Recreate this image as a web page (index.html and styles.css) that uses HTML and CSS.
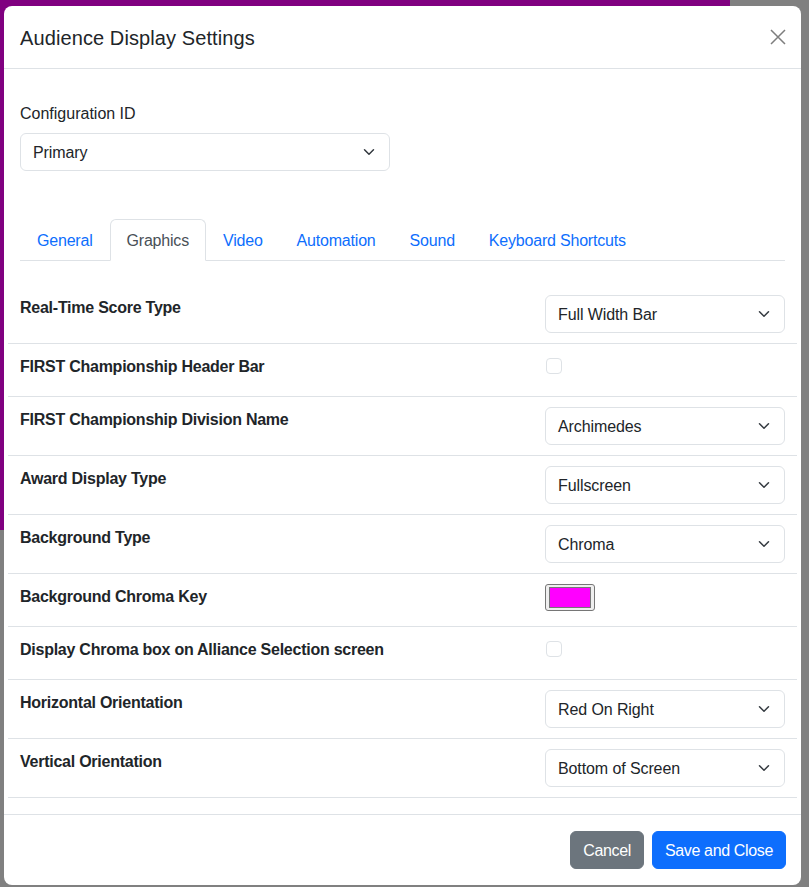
FILE: index.html
```html
<!DOCTYPE html>
<html lang="en">
<head>
<meta charset="utf-8">
<title>Audience Display Settings</title>
<link rel="stylesheet" href="styles.css">
</head>
<body>
<div class="modal">
  <div class="modal-header">
    <h5 class="modal-title">Audience Display Settings</h5>
    <button class="btn-close" aria-label="Close">
      <svg width="16" height="16" viewBox="0 0 16 16"><path d="M1 1 15 15M15 1 1 15" stroke="#000" stroke-width="1.5" fill="none"/></svg>
    </button>
  </div>
  <div class="modal-body">
    <div class="config">
      <label class="form-label">Configuration ID</label>
      <div class="select select-config"><span>Primary</span><svg class="chev" width="16" height="12" viewBox="0 0 16 16"><path d="m2 5 6 6 6-6" fill="none" stroke="#343a40" stroke-width="2" stroke-linecap="round" stroke-linejoin="round"/></svg></div>
    </div>
    <ul class="nav-tabs">
      <li><a class="nav-link">General</a></li>
      <li><a class="nav-link active">Graphics</a></li>
      <li><a class="nav-link">Video</a></li>
      <li><a class="nav-link">Automation</a></li>
      <li><a class="nav-link">Sound</a></li>
      <li><a class="nav-link">Keyboard Shortcuts</a></li>
    </ul>
    <div class="tab-content">
      <div class="settings">
        <div class="row">
          <div class="cell-label">Real-Time Score Type</div>
          <div class="cell-control"><div class="select"><span>Full Width Bar</span><svg class="chev" width="16" height="12" viewBox="0 0 16 16"><path d="m2 5 6 6 6-6" fill="none" stroke="#343a40" stroke-width="2" stroke-linecap="round" stroke-linejoin="round"/></svg></div></div>
        </div>
        <div class="row">
          <div class="cell-label">FIRST Championship Header Bar</div>
          <div class="cell-control"><div class="check-wrap"><span class="checkbox"></span></div></div>
        </div>
        <div class="row">
          <div class="cell-label">FIRST Championship Division Name</div>
          <div class="cell-control"><div class="select"><span>Archimedes</span><svg class="chev" width="16" height="12" viewBox="0 0 16 16"><path d="m2 5 6 6 6-6" fill="none" stroke="#343a40" stroke-width="2" stroke-linecap="round" stroke-linejoin="round"/></svg></div></div>
        </div>
        <div class="row">
          <div class="cell-label">Award Display Type</div>
          <div class="cell-control"><div class="select"><span>Fullscreen</span><svg class="chev" width="16" height="12" viewBox="0 0 16 16"><path d="m2 5 6 6 6-6" fill="none" stroke="#343a40" stroke-width="2" stroke-linecap="round" stroke-linejoin="round"/></svg></div></div>
        </div>
        <div class="row">
          <div class="cell-label">Background Type</div>
          <div class="cell-control"><div class="select"><span>Chroma</span><svg class="chev" width="16" height="12" viewBox="0 0 16 16"><path d="m2 5 6 6 6-6" fill="none" stroke="#343a40" stroke-width="2" stroke-linecap="round" stroke-linejoin="round"/></svg></div></div>
        </div>
        <div class="row">
          <div class="cell-label">Background Chroma Key</div>
          <div class="cell-control"><div class="color-wrap"><span class="color-input"><span class="swatch"></span></span></div></div>
        </div>
        <div class="row">
          <div class="cell-label">Display Chroma box on Alliance Selection screen</div>
          <div class="cell-control"><div class="check-wrap"><span class="checkbox"></span></div></div>
        </div>
        <div class="row">
          <div class="cell-label">Horizontal Orientation</div>
          <div class="cell-control"><div class="select"><span>Red On Right</span><svg class="chev" width="16" height="12" viewBox="0 0 16 16"><path d="m2 5 6 6 6-6" fill="none" stroke="#343a40" stroke-width="2" stroke-linecap="round" stroke-linejoin="round"/></svg></div></div>
        </div>
        <div class="row">
          <div class="cell-label">Vertical Orientation</div>
          <div class="cell-control"><div class="select"><span>Bottom of Screen</span><svg class="chev" width="16" height="12" viewBox="0 0 16 16"><path d="m2 5 6 6 6-6" fill="none" stroke="#343a40" stroke-width="2" stroke-linecap="round" stroke-linejoin="round"/></svg></div></div>
        </div>
      </div>
    </div>
  </div>
  <div class="modal-footer">
    <button class="btn btn-secondary">Cancel</button>
    <button class="btn btn-primary">Save and Close</button>
  </div>
</div>
</body>
</html>
```

FILE: styles.css
```css
* { box-sizing: border-box; }

html, body { height: 100%; }

body {
  margin: 0;
  font-family: "Liberation Sans", Arial, sans-serif;
  font-size: 16px;
  line-height: 24px;
  color: #212529;
  background: linear-gradient(#800080, #800080) no-repeat 0 0 / 730px 530px, #808080;
  overflow: hidden;
}

.modal {
  width: 797px;
  height: 879px;
  margin: 6px 0 0 4px;
  background: #fff;
  border-radius: 8px;
  display: flex;
  flex-direction: column;
  overflow: hidden;
}

.modal-header {
  display: flex;
  align-items: center;
  padding: 17px 16px 15px 16px;
  border-bottom: 1px solid #dee2e6;
}

.modal-title {
  margin: 0;
  font-size: 20px;
  line-height: 30px;
  font-weight: 500;
  letter-spacing: 0.1px;
}

.btn-close {
  margin-left: auto;
  margin-right: -1px;
  margin-top: -2px;
  padding: 0;
  border: 0;
  background: transparent;
  opacity: 0.5;
  width: 16px;
  height: 16px;
  display: flex;
}

.modal-body {
  flex: 1;
  padding: 16px;
}

.config {
  margin-top: 17px;
  display: flex;
  flex-direction: column;
  align-items: flex-start;
}

.form-label {
  margin-bottom: 7px;
}

.select {
  display: flex;
  align-items: center;
  height: 38px;
  width: 240px;
  padding: 7px 12px 5px;
  border: 1px solid #dee2e6;
  border-radius: 6px;
  background: #fff;
  color: #212529;
  letter-spacing: -0.1px;
}

.select-config { width: 370px; }

.chev { margin-left: auto; flex: none; margin-top: -2px; }

.nav-tabs {
  list-style: none;
  margin: 48px 0 0 0;
  padding: 0;
  display: flex;
  border-bottom: 1px solid #dee2e6;
}

.nav-link {
  display: block;
  padding: 9px 16px 7px;
  border: 1px solid transparent;
  border-top-left-radius: 6px;
  border-top-right-radius: 6px;
  margin-bottom: -1px;
  color: #0d6efd;
  text-decoration: none;
  letter-spacing: -0.2px;
}

.nav-link.active {
  color: #495057;
  background: #fff;
  border-color: #dee2e6 #dee2e6 #fff;
}

.tab-content {
  padding-top: 24px;
}

.settings {
  margin: 0 -12px;
}

.row {
  display: flex;
  border-bottom: 1px solid #dee2e6;
}

.cell-label {
  flex: 1;
  padding: 11px 12px 9px;
  font-weight: bold;
  letter-spacing: -0.25px;
}

.cell-control {
  width: 264px;
  flex: none;
  padding: 10px 12px;
}

.check-wrap {
  height: 32px;
  padding-top: 4px;
  padding-left: 1px;
}

.checkbox {
  display: block;
  width: 16px;
  height: 16px;
  border: 1px solid #dee2e6;
  border-radius: 4px;
  background: #fff;
}

.color-wrap {
  height: 32px;
}

.color-input {
  display: flex;
  width: 50px;
  height: 27px;
  padding: 2px 3px;
  border: 1px solid #767676;
  border-radius: 3px;
  background: #efefef;
}

.swatch {
  flex: 1;
  background: #ff00ff;
  border: 1px solid #777;
}

.modal-footer {
  display: flex;
  justify-content: flex-end;
  gap: 8px;
  padding: 16px 15px 16px 16px;
  border-top: 1px solid #dee2e6;
}

.btn {
  font-family: inherit;
  font-size: 16px;
  line-height: 24px;
  padding: 7px 12px 5px;
  border: 1px solid transparent;
  border-radius: 6px;
  color: #fff;
  letter-spacing: -0.35px;
}

.btn-secondary { background: #6c757d; border-color: #6c757d; }
.btn-primary { background: #0d6efd; border-color: #0d6efd; }
```
